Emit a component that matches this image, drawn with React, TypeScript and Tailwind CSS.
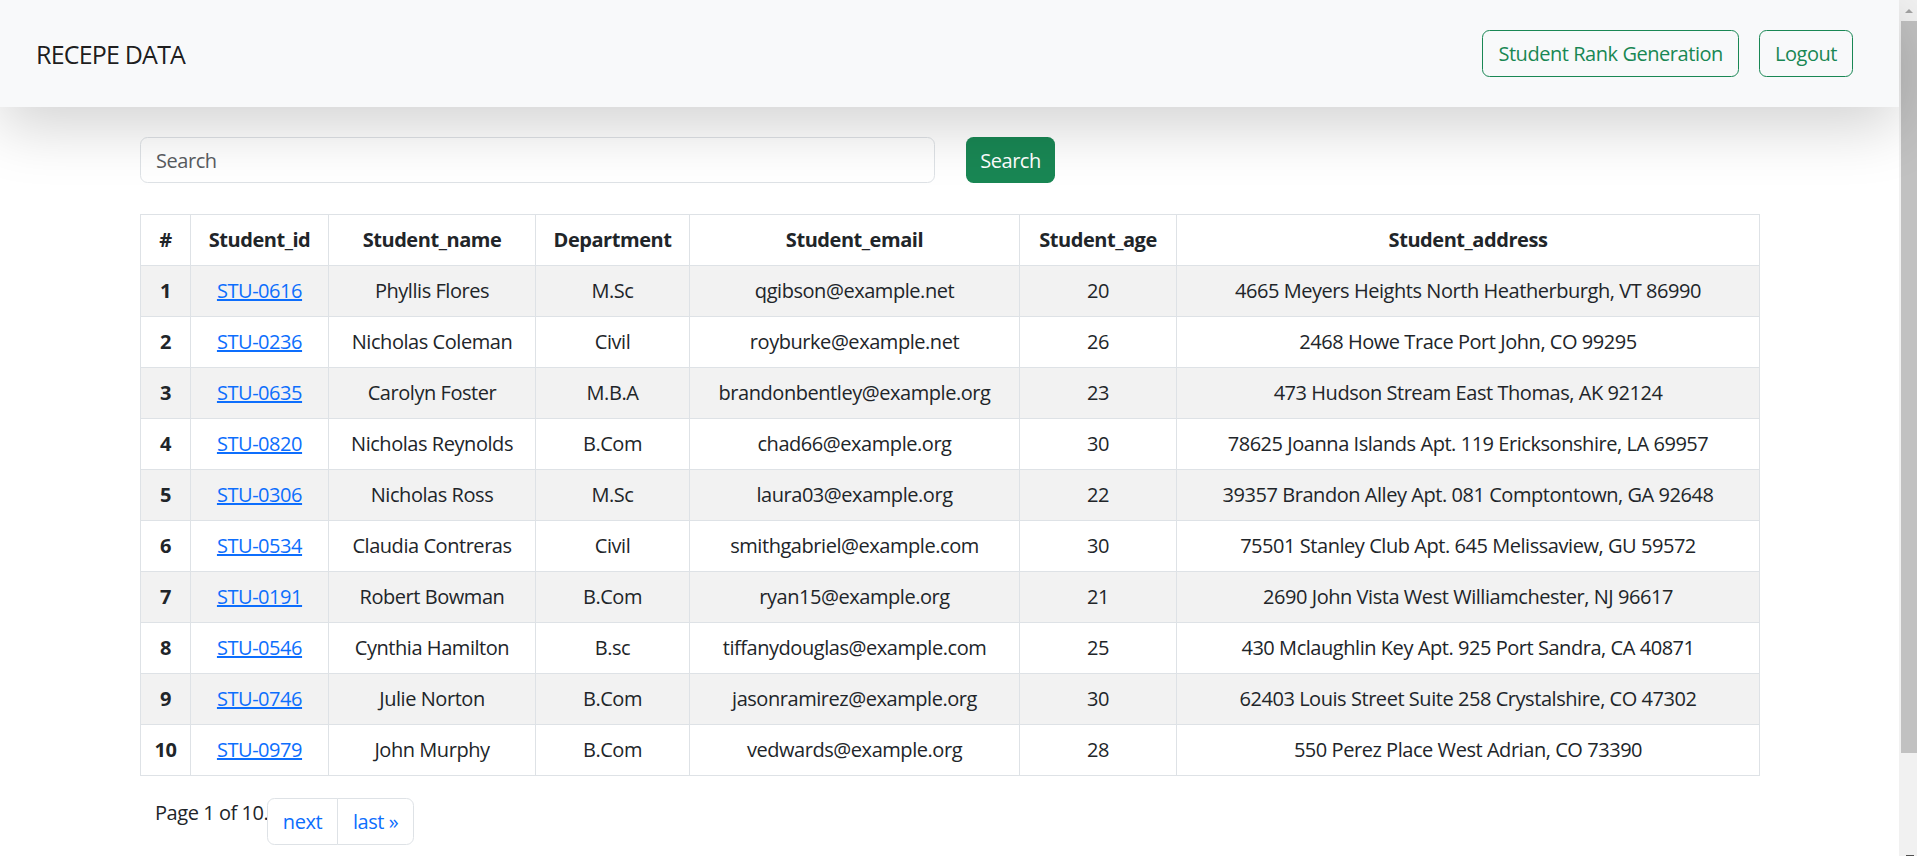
import React from "react";

const rows = [
  ["1", "STU-0616", "Phyllis Flores", "M.Sc", "qgibson@example.net", "20", "4665 Meyers Heights North Heatherburgh, VT 86990"],
  ["2", "STU-0236", "Nicholas Coleman", "Civil", "royburke@example.net", "26", "2468 Howe Trace Port John, CO 99295"],
  ["3", "STU-0635", "Carolyn Foster", "M.B.A", "brandonbentley@example.org", "23", "473 Hudson Stream East Thomas, AK 92124"],
  ["4", "STU-0820", "Nicholas Reynolds", "B.Com", "chad66@example.org", "30", "78625 Joanna Islands Apt. 119 Ericksonshire, LA 69957"],
  ["5", "STU-0306", "Nicholas Ross", "M.Sc", "laura03@example.org", "22", "39357 Brandon Alley Apt. 081 Comptontown, GA 92648"],
  ["6", "STU-0534", "Claudia Contreras", "Civil", "smithgabriel@example.com", "30", "75501 Stanley Club Apt. 645 Melissaview, GU 59572"],
  ["7", "STU-0191", "Robert Bowman", "B.Com", "ryan15@example.org", "21", "2690 John Vista West Williamchester, NJ 96617"],
  ["8", "STU-0546", "Cynthia Hamilton", "B.sc", "tiffanydouglas@example.com", "25", "430 Mclaughlin Key Apt. 925 Port Sandra, CA 40871"],
  ["9", "STU-0746", "Julie Norton", "B.Com", "jasonramirez@example.org", "30", "62403 Louis Street Suite 258 Crystalshire, CO 47302"],
  ["10", "STU-0979", "John Murphy", "B.Com", "vedwards@example.org", "28", "550 Perez Place West Adrian, CO 73390"],
];

const headers = ["#", "Student_id", "Student_name", "Department", "Student_email", "Student_age", "Student_address"];

export default function App() {
  return (
    <div className="flex h-[856px] w-full overflow-hidden bg-white text-[#212529] tracking-[-0.45px] font-['Open_Sans','Noto_Sans',sans-serif]">
      <div className="flex-1 min-w-0">
        <nav className="relative z-10 flex h-[107px] items-center justify-between bg-[#f8f9fa] pl-[36px] pr-[46px] shadow-[0_20px_60px_rgba(0,0,0,0.175)]">
          <span className="text-[25px] leading-[30px] tracking-[-0.8px] text-black/90">RECEPE DATA</span>
          <div className="flex gap-[20px]">
            <button className="h-[47px] rounded-[7.5px] border border-[#198754] px-[15px] text-[20px] leading-[30px] text-[#198754]">
              Student Rank Generation
            </button>
            <button className="h-[47px] rounded-[7.5px] border border-[#198754] px-[15px] text-[20px] leading-[30px] text-[#198754]">
              Logout
            </button>
          </div>
        </nav>

        <main className="pl-[140px]">
          <div className="mt-[30px] flex gap-[31px]">
            <input
              placeholder="Search"
              className="h-[46px] w-[795px] rounded-[7.5px] border border-[#dee2e6] bg-white px-[15px] text-[20px] tracking-[-0.45px] outline-none placeholder:text-[#595c5f]"
            />
            <button className="h-[46px] w-[89px] rounded-[7.5px] bg-[#198754] pt-px text-[20px] leading-[30px] text-white">
              Search
            </button>
          </div>

          <table className="mt-[31px] w-[1619px] table-fixed border-collapse text-[20px] leading-[30px]">
            <colgroup>
              <col className="w-[50px]" />
              <col className="w-[138px]" />
              <col className="w-[207px]" />
              <col className="w-[154px]" />
              <col className="w-[330px]" />
              <col className="w-[157px]" />
              <col className="w-[583px]" />
            </colgroup>
            <thead>
              <tr>
                {headers.map((h) => (
                  <th key={h} className="border border-[#dee2e6] px-[10px] py-[10px] text-center font-bold whitespace-nowrap">
                    {h}
                  </th>
                ))}
              </tr>
            </thead>
            <tbody>
              {rows.map((r, i) => (
                <tr key={r[0]} className={i % 2 === 0 ? "bg-[#f2f2f2]" : "bg-white"}>
                  <th className="border border-[#dee2e6] px-[10px] py-[10px] text-center font-bold">{r[0]}</th>
                  <td className="border border-[#dee2e6] px-[10px] py-[10px] text-center">
                    <a href="#" className="text-[#0d6efd] underline">{r[1]}</a>
                  </td>
                  {r.slice(2).map((c, j) => (
                    <td key={j} className="border border-[#dee2e6] px-[10px] py-[10px] text-center whitespace-nowrap">
                      {c}
                    </td>
                  ))}
                </tr>
              ))}
            </tbody>
          </table>

          <div className="mt-[22px] flex items-start">
            <span className="w-[127px] whitespace-nowrap pl-[15px] text-[20px] leading-[30px]">Page 1 of 10.</span>
            <div className="flex text-[20px] leading-[30px] text-[#0d6efd]">
              <a href="#" className="flex h-[47px] w-[71px] items-center justify-center rounded-l-[7.5px] border border-[#dee2e6] bg-white">
                next
              </a>
              <a href="#" className="-ml-px flex h-[47px] w-[77px] items-center justify-center rounded-r-[7.5px] border border-[#dee2e6] bg-white">
                last »
              </a>
            </div>
          </div>
        </main>
      </div>

      <div className="flex w-[18px] shrink-0 flex-col bg-[#f1f1f1]">
        <div className="flex h-[21px] items-center justify-center pl-[2px]">
          <div className="h-0 w-0 border-x-[4px] border-b-[4px] border-x-transparent border-b-[#a3a3a3]" />
        </div>
        <div className="ml-[2px] h-[732px] w-[16px] bg-[#c1c1c1]" />
        <div className="flex-1" />
        <div className="ml-[7px] h-px w-[8px] bg-[#505050]" />
      </div>
    </div>
  );
}
